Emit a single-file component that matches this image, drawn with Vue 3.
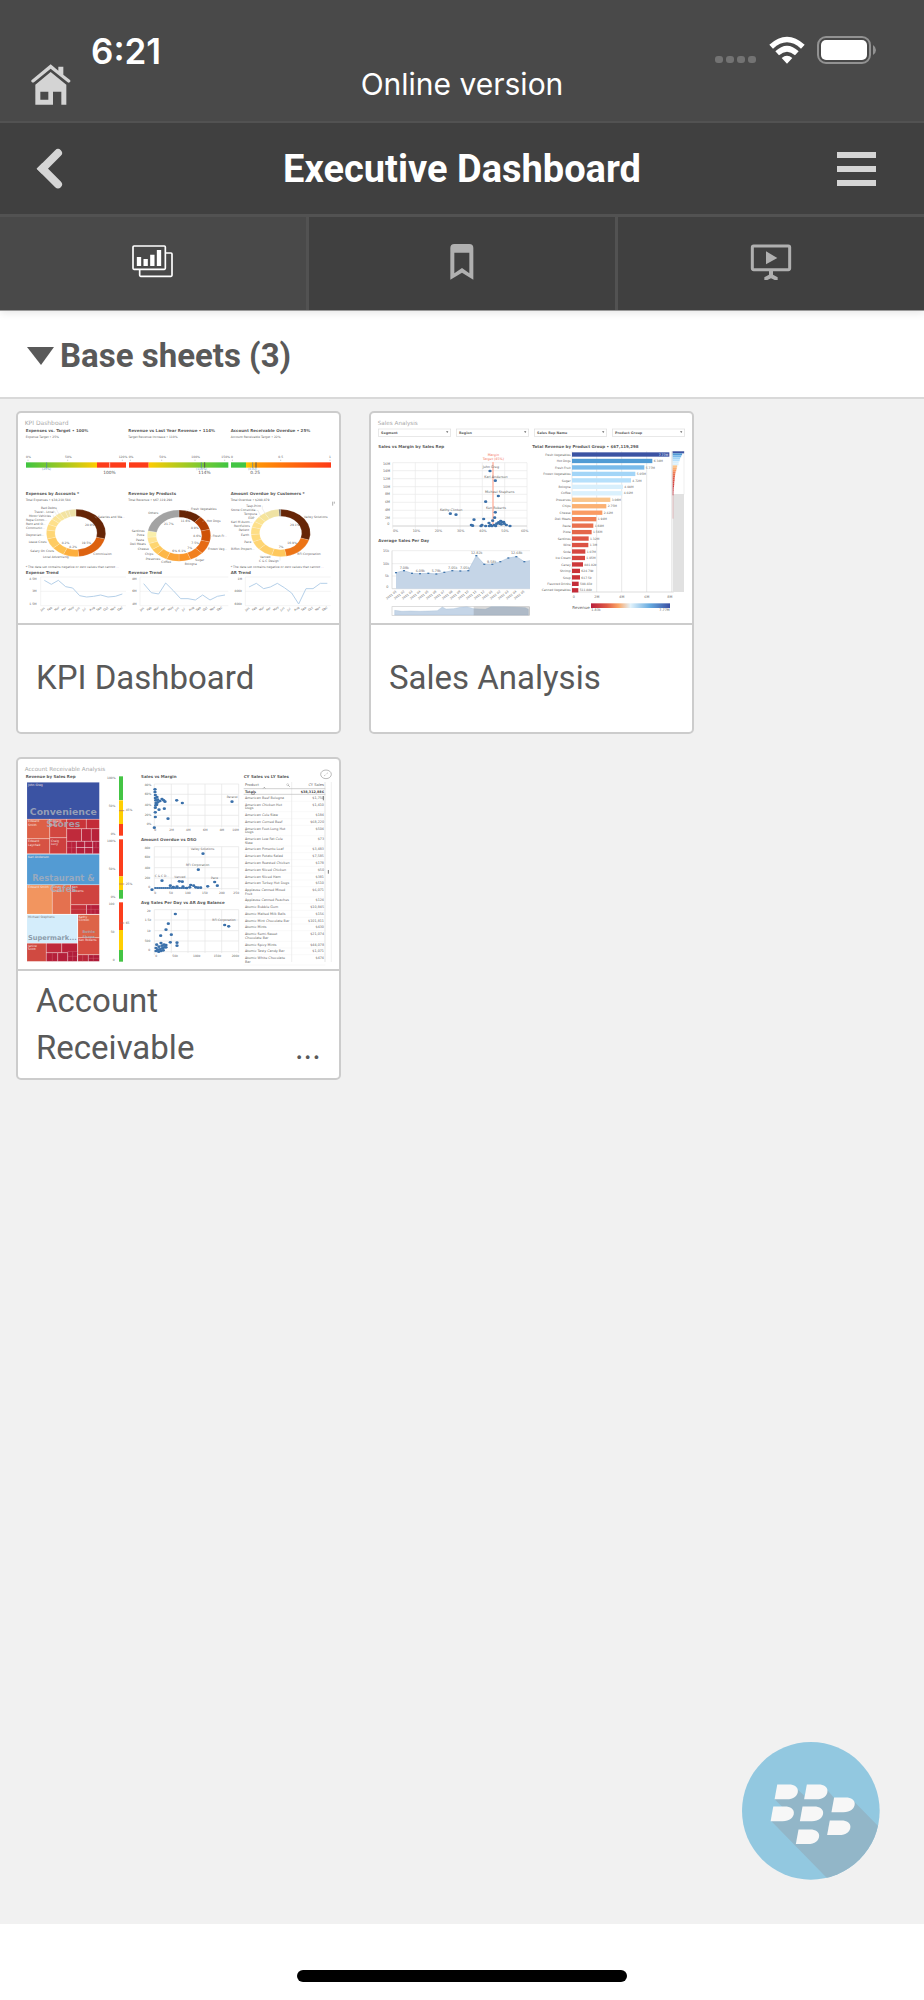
<script setup>
const TXT = '#666'

/* ---------- shared drawing helpers ---------- */
function point(cx, cy, rx, ry, f) {
  const a = f * Math.PI * 2
  return `${(cx + rx * Math.sin(a)).toFixed(1)} ${(cy - ry * Math.cos(a)).toFixed(1)}`
}
function slices(d) {
  let from = 0
  return d.parts.map(([to, fill]) => {
    const big = to - from > 0.5 ? 1 : 0
    const path = `M${point(d.cx, d.cy, d.rx, d.ry, from)}A${d.rx} ${d.ry} 0 ${big} 1 ${point(d.cx, d.cy, d.rx, d.ry, to)}` +
      `L${point(d.cx, d.cy, d.ix, d.iy, to)}A${d.ix} ${d.iy} 0 ${big} 0 ${point(d.cx, d.cy, d.ix, d.iy, from)}Z`
    from = to
    return { path, fill }
  })
}
const months = ['Jan', 'Feb', 'Mar', 'Apr', 'May', 'Jun', 'Jul', 'Aug', 'Sep', 'Oct', 'Nov', 'Dec']

/* ---------- KPI dashboard ---------- */
const donuts = [
  { cx: 198, cy: 383, rx: 89, ry: 71, ix: 63, iy: 50, parts: [[0.29, '#662506'], [0.485, '#dd6210'], [0.57, '#fdae3c'], [0.64, '#fec04f'], [0.71, '#fecb62'], [0.77, '#fed676'], [0.81, '#fedc82'], [0.85, '#fee08b'], [0.88, '#fbe395'], [0.91, '#f8e69c'], [0.94, '#f3e3a0'], [0.96, '#f0e2a6'], [1, '#ece0a8']] },
  { cx: 507, cy: 391, rx: 95, ry: 77, ix: 68, iy: 55, parts: [[0.12, '#662506'], [0.21, '#b03f04'], [0.29, '#cf5206'], [0.37, '#e66a14'], [0.44, '#f1801f'], [0.5, '#fb962a'], [0.565, '#fba437'], [0.62, '#fdb748'], [0.66, '#fec75a'], [0.7, '#fed56f'], [0.74, '#fee391'], [0.78, '#f9efab'], [1, '#a3a3a3']] },
  { cx: 812, cy: 383, rx: 89, ry: 71, ix: 63, iy: 50, parts: [[0.298, '#662506'], [0.47, '#ec7416'], [0.55, '#fec85c'], [0.63, '#fed06c'], [0.69, '#fed574'], [0.74, '#feda7c'], [0.79, '#fede85'], [0.83, '#fee08b'], [0.87, '#fbe393'], [0.91, '#f6e49b'], [0.99, '#efe2a3'], [1, '#777']] }
]
const kpiTitles = [
  [47, 81, 'Expenses vs. Target • 100%'], [355, 81, 'Revenue vs Last Year Revenue • 114%'], [662, 81, 'Account Receivable Overdue • 25%'],
  [47, 269, 'Expenses by Accounts *'], [355, 269, 'Revenue by Products'], [662, 269, 'Amount Overdue by Customers *'],
  [47, 505, 'Expense Trend'], [355, 505, 'Revenue Trend'], [662, 505, 'AR Trend']
]
const kpiSmall = [
  [47, 97, 'Expense Target • 25%'], [355, 97, 'Target Revenue Increase • 110%'], [662, 97, 'Account Receivable Target • 22%'],
  [47, 286, 'Total Expenses • $38,210,584'], [355, 286, 'Total Revenue • $67,119,298'], [662, 286, 'Total Overdue • $288,879'],
  [47, 488, '* The data set contains negative or zero values that cannot ...'], [662, 488, '* The data set contains negative or zero values that cannot ...'],
  [48, 159, '0%'], [165, 159, '50%'], [326, 159, '120%'], [356, 159, '0%'], [448, 159, '50%'], [544, 159, '100%'], [634, 159, '150%'], [663, 159, '0'], [805, 159, '0.5'], [957, 159, '1'],
  [93, 311, 'Bad Debts'], [73, 322, 'Travel - Local'], [57, 334, 'Motor Vehicles'], [48, 346, 'Repa Comm...'], [48, 358, 'Rent and O...'], [48, 370, 'Communic...'], [48, 391, 'Depreciati...'], [56, 414, 'Lease Costs'], [61, 440, 'Salary On Costs'], [99, 459, 'Local Advertising'], [264, 338, 'Salaries and Wa...'], [250, 449, 'Commission'],
  [415, 325, 'Others'], [543, 315, 'Fresh Vegetables'], [590, 349, 'Hot Dogs'], [608, 396, 'Fresh Fr...'], [594, 434, 'Frozen Veg...'], [556, 467, 'Sugar'], [524, 479, 'Bologna'], [454, 474, 'Coffee'], [407, 464, 'Preserves'], [405, 449, 'Chips'], [383, 433, 'Cheese'], [360, 418, 'Deli Meats'], [378, 406, 'Pasta'], [380, 393, 'Pizza'], [365, 380, 'Sardines'],
  [709, 305, 'Tasp-Print'], [663, 317, 'Stone Consolida...'], [702, 328, 'Tempura'], [715, 340, 'EDP'], [663, 352, 'Karl M Asom...'], [672, 364, 'Rectfullors'], [686, 376, 'Patient'], [693, 391, 'Earth'], [703, 412, 'Pace'], [663, 434, 'Biffon Propert...'], [750, 459, 'Varved'], [747, 471, 'C & C Design'], [882, 338, 'Valley Solutions'], [862, 449, 'RFI Corporation'],
  [225, 361, '28.9%'], [215, 416, '19.5%'], [155, 416, '8.2%'], [178, 428, '8.2%'], [462, 360, '21.7%'], [512, 349, '11.6%'], [543, 370, '8.9%'], [550, 395, '8.6%'], [544, 415, '7.5%'], [532, 431, '7%'], [505, 439, '6.1%'], [487, 439, '6%'], [840, 361, '29.1%'], [832, 416, '16.9%'], [806, 429, '7%']
]
const kpiTrends = [
  { x: 92, right: 348, labels: ['4.5M', '3M', '1.5M'], lx: 80, line: '103,525 124,537 145,525 167,544 188,548 209,571 230,575 251,573 272,569 294,575 316,573 337,566', start: 98 },
  { x: 390, right: 655, labels: ['8M', '6M', '4M'], lx: 380, line: '401,535 424,562 446,566 467,533 490,556 512,580 534,580 556,584 578,569 600,584 622,573 645,569', start: 396 },
  { x: 706, right: 962, labels: ['1M', '800k', '600k'], lx: 696, line: '717,545 739,534 761,550 781,545 802,534 823,547 845,563 866,596 888,550 909,550 931,534 952,534', start: 712 }
]

/* ---------- Sales analysis ---------- */
const filters = [[54, 'Segment'], [288, 'Region'], [522, 'Sales Rep Name'], [756, 'Product Group']]
const productBars = [
  ['Fresh Vegetables', 292, '7.77M', '#3b53a3'], ['Hot Dogs', 241, '6.38M', '#519bd4'], ['Fresh Fruit', 217, '5.77M', '#79baea'], ['Frozen Vegetables', 190, '5.05M', '#a3d5f7'], ['Sugar', 177, '4.72M', '#b7e0fb'], ['Bologna', 153, '4.08M', '#d8effc'], ['Coffee', 151, '4.02M', '#dbf1fd'], ['Preserves', 115, '3.06M', '#f9c58c'], ['Chips', 103, '2.75M', '#fbb071'], ['Cheese', 91, '2.42M', '#fa9b63'], ['Deli Meats', 73, '1.94M', '#f08055'], ['Pasta', 64, '1.68M', '#e9704e'], ['Pizza', 59, '1.56M', '#e4664a'], ['Sardines', 50, '1.32M', '#de5545'], ['Wine', 49, '1.3M', '#dc5244'], ['Soda', 40, '1.07M', '#d64741'], ['Ice Cream', 39, '1.05M', '#d5453f'], ['Canay', 33, '881.82k', '#cd383b'], ['Shrimp', 24, '624.79k', '#c93138'], ['Soup', 24, '617.5k', '#c93138'], ['Flavored Drinks', 20, '508.83k', '#c52d39'], ['Canned Vegetables', 19, '511.88k', '#c42b38']
]
const salesDots = [[389, 197], [405, 226], [414, 272], [376, 289], [270, 325], [287, 328], [405, 321], [341, 343], [370, 341], [403, 337], [397, 346], [386, 353], [333, 359], [337, 361], [365, 359], [362, 362], [376, 362], [391, 359], [395, 362], [402, 359], [406, 362], [409, 355], [415, 351], [418, 355], [421, 347], [425, 350], [430, 350], [432, 355], [423, 357], [438, 359], [449, 362], [387, 362]]
const salesText = [
  [367, 187, 'John Greg'], [372, 217, 'Karl Anderson'], [374, 262, 'Michael Stephens'], [377, 311, 'Ken Roberts'], [239, 317, 'Kathy Clinton'],
  [68, 180, '16M'], [68, 199, '14M'], [68, 223, '12M'], [68, 247, '10M'], [74, 270, '8M'], [74, 294, '6M'], [74, 318, '4M'], [74, 341, '2M'], [81, 360, '0'],
  [98, 380, '0%'], [157, 380, '10%'], [223, 380, '20%'], [290, 380, '30%'], [357, 380, '40%'], [423, 380, '50%'], [482, 380, '60%'],
  [68, 439, '15k'], [68, 478, '10k'], [74, 515, '5k'], [78, 549, '0'],
  [118, 490, '7.08k'], [166, 499, '6.09k'], [214, 501, '5.79k'], [263, 491, '7.05k'], [299, 491, '7.05k'], [332, 445, '12.82k'], [380, 472, '9.58k'], [452, 447, '12.68k'],
  [637, 577, '0'], [702, 577, '2M'], [777, 577, '4M'], [852, 577, '6M'], [921, 577, '8M'], [693, 618, '1.83k'], [897, 618, '7.77M']
]
const area = '107,502 131,496 155,504 179,505 204,504 228,506 252,501 276,496 300,497 324,496 348,451 372,477 396,477 420,469 444,458 468,454 492,469 509,466'
const areaDots = area.split(' ').slice(0, 17).map(p => p.split(',').map(Number))
const days = ['2011-01', '2011-02', '2011-03', '2011-04', '2011-05', '2011-06', '2011-07', '2011-08', '2011-09', '2011-10', '2011-11', '2011-12', '2012-01', '2012-02', '2012-03', '2012-04', '2012-05']

/* ---------- Account receivable ---------- */
const tree = [
  [51, 96, 217, 110, '#3b53a3'], [51, 207, 68, 58, '#dd6046'], [51, 266, 68, 44, '#d65243'], [120, 207, 50, 55, '#d24740'], [120, 263, 50, 47, '#cd3f3e'], [171, 207, 57, 28, '#c93439'], [229, 207, 39, 28, '#c32c38'], [171, 236, 43, 36, '#bf2a3b'], [215, 236, 28, 36, '#ba243a'], [244, 236, 24, 36, '#b82239'], [171, 273, 27, 37, '#b9213b'], [199, 273, 25, 18, '#b31e3b'], [225, 273, 23, 18, '#b31e3b'], [199, 292, 25, 18, '#b31e3b'], [225, 292, 23, 18, '#b31e3b'], [249, 273, 19, 37, '#b01c3b'],
  [51, 312, 217, 91, '#539bd3'], [51, 404, 75, 87, '#f2955f'], [127, 404, 55, 87, '#e4714f'], [183, 404, 85, 59, '#cf433f'], [183, 464, 46, 27, '#c3303a'], [230, 464, 38, 27, '#b51f3a'],
  [51, 493, 151, 85, '#d4edfb'], [204, 493, 64, 69, '#dd6448'], [204, 563, 64, 50, '#d64d41'], [51, 579, 57, 54, '#d04a41'], [109, 579, 46, 28, '#bf2a3c'], [156, 579, 46, 28, '#b9223a'], [109, 608, 34, 25, '#b51f3a'], [144, 608, 29, 25, '#b51f3a'], [174, 604, 28, 29, '#b11c3a'], [204, 614, 30, 19, '#b92739'], [235, 614, 33, 19, '#ae1b38']
]
const treeSplit = 'M185 273v37M171 292h27M249 292h19M258 273v19M183 477h46M230 477h38M243 464v27M255 477v14M174 618h28M188 604v29M235 624h33M250 614v19M127 608v25M218 614v19'
const treeText = [[54, 107, 'John Greg'], [54, 216, 'Edward'], [54, 227, 'Smith'], [121, 216, 'Edward'], [121, 227, 'Ross'], [54, 276, 'Edward'], [54, 286, 'Laychak'], [123, 274, 'Craig'], [123, 285, 'Lucy'], [54, 323, 'Karl Anderson'], [54, 414, 'Edward Smith'], [128, 414, 'Cindy'], [128, 424, 'Cheuk'], [186, 414, 'Ken'], [186, 424, 'Roberts'], [206, 502, 'Kathy'], [206, 513, 'Clinton'], [206, 573, 'Ken Roberts'], [54, 589, 'Janice'], [54, 600, 'Scott']]
const gauges = [
  [78, 71, '#44c444'], [150, 71, '#ffcf02'], [221, 35, '#fc3e1d'],
  [267, 111, '#fc3e1d'], [378, 41, '#ffcf02'], [419, 26, '#44c444'],
  [456, 83, '#fc3e1d'], [539, 60, '#ffcf02'], [599, 35, '#44c444']
]
const arDots = [
  [500, 150], [517, 158], [666, 154], [474, 205], [447, 178], [463, 175], [465, 154], [456, 146], [461, 150], [450, 152], [436, 200], [436, 186], [433, 232], [435, 117], [435, 125], [436, 134], [436, 143], [437, 150], [438, 158], [437, 165], [436, 172], [441, 140], [443, 148], [443, 156], [440, 163],
  [579, 310], [565, 358], [456, 391], [508, 393], [517, 394], [614, 395], [622, 406], [593, 408], [426, 418], [481, 406], [490, 410], [501, 409], [519, 409], [542, 404], [551, 406], [557, 411], [564, 412], [572, 412], [539, 411], [530, 413],
  [496, 491], [475, 520], [468, 538], [484, 553], [452, 556], [644, 524], [656, 528], [481, 576], [501, 577], [501, 586], [440, 583], [447, 589], [453, 578], [456, 586], [462, 583], [468, 584], [438, 593], [443, 598], [450, 597], [457, 594], [463, 591], [438, 602], [446, 604], [453, 602], [460, 600], [468, 591]
]
const flatDots = Array.from({ length: 16 }, (_, i) => 436 + i * 6)
const arText = [
  [291, 87, '100%'], [296, 169, '50%'], [302, 253, '0%'], [347, 183, '45%'], [291, 275, '100%'], [296, 359, '50%'], [302, 442, '0%'], [347, 403, '25%'], [296, 465, '100'], [302, 547, '50'], [308, 631, '0'], [347, 521, '65'],
  [404, 107, '80%'], [404, 134, '60%'], [404, 166, '40%'], [404, 197, '20%'], [410, 225, '0%'], [433, 243, '0'], [478, 243, '2M'], [528, 243, '4M'], [579, 243, '6M'], [629, 243, '8M'], [667, 243, '10M'], [650, 143, 'Paracel'],
  [404, 296, '80k'], [404, 323, '60k'], [404, 355, '40k'], [404, 386, '20k'], [415, 413, '0'], [433, 431, '0'], [477, 431, '50'], [525, 431, '100'], [576, 431, '150'], [627, 431, '200'], [670, 431, '250'], [542, 299, 'Valley Solutions'], [528, 346, 'RFI Corporation'], [434, 380, 'C & C D...'], [493, 382, 'Vanved'], [603, 385, 'Pace'],
  [411, 486, '2k'], [404, 512, '1.5k'], [411, 544, '1k'], [404, 575, '500'], [415, 602, '0'], [436, 621, '0'], [487, 621, '50k'], [549, 621, '100k'], [611, 621, '150k'], [665, 621, '200k'], [607, 513, 'RFI Corporation']
]
const arRows = [
  [146, ['American Beef Bologna'], '$1,750'], [166, ['American Chicken Hot', 'Dogs'], '$1,410'], [198, ['American Cole Slaw'], '$184'], [218, ['American Corned Beef'], '$68,220'], [238, ['American Foot-Long Hot', 'Dogs'], '$504'], [269, ['American Low Fat Cole', 'Slaw'], '$73'], [300, ['American Pimento Loaf'], '$3,483'], [321, ['American Potato Salad'], '$7,585'], [341, ['American Roasted Chicken'], '$178'], [361, ['American Sliced Chicken'], '$50'], [382, ['American Sliced Ham'], '$381'], [402, ['American Turkey Hot Dogs'], '$510'], [422, ['Applause Canned Mixed', 'Fruit'], '$6,071'], [453, ['Applause Canned Peaches'], '$124'], [473, ['Atomic Bubble Gum'], '$10,845'], [494, ['Atomic Malted Milk Balls'], '$156'], [514, ['Atomic Mint Chocolate Bar'], '$101,811'], [534, ['Atomic Mints'], '$430'], [555, ['Atomic Semi-Sweet', 'Chocolate Bar'], '$21,074'], [586, ['Atomic Spicy Mints'], '$44,078'], [606, ['Atomic Tasty Candy Bar'], '$1,071'], [626, ['Atomic White Chocolate', 'Bar'], '$474']
]

/* ---------- floating button glyph ---------- */
const keys = [[171, 193], [260, 193], [342, 232], [159, 259], [247, 259], [329, 301], [235, 328]]
</script>

<template>
  <div class="app">
    <header>
      <div class="status">
        <div class="status-left">
          <button class="plain home" aria-label="Home">
            <svg width="40" height="42" viewBox="95 193 120 126" fill="#d4d4d4">
              <path d="M154 194 177 213V201H192V225L212 241Q215 245 211 248 208 250 205 248L154 207 104 248Q100 250 97 247 94 243 98 240Z" />
              <path fill-rule="evenodd" d="M154 217 201 255V315H186V276H161V315H108V255ZM123 276V300H147V276Z" />
            </svg>
          </button>
          <time class="clock">6:21</time>
        </div>
        <p class="online">Online version</p>
        <div class="status-right">
          <svg width="42" height="28" viewBox="0 0 42 28" fill="#737373"><rect v-for="i in 4" :key="i" :x="(i - 1) * 11" y="20" width="8" height="7" rx="3" /></svg>
          <svg width="38" height="28" viewBox="0 0 114 84" fill="#fff">
            <path d="M4 26Q57-22 110 26L99 38Q57 0 15 38ZM22 46Q57 12 92 46L81 58Q57 36 33 58ZM41 66Q57 52 73 66L57 83Z" />
          </svg>
          <svg width="60" height="28" viewBox="0 0 60 28">
            <rect x="1" y="1" width="52" height="26" rx="8" fill="none" stroke="#929292" stroke-width="2" />
            <rect x="4" y="4" width="46" height="20" rx="5" fill="#fff" /><path d="M56 9q3 2 3 5t-3 5z" fill="#929292" />
          </svg>
        </div>
      </div>

      <div class="titlebar">
        <button class="plain" aria-label="Back">
          <svg width="28" height="42" viewBox="108 446 84 126"><path d="M174 461 127 508 174 555" fill="none" stroke="#d5d5d5" stroke-width="24" stroke-linecap="round" /><path d="M110 508 127 491 144 508 127 525Z" fill="#d5d5d5" /></svg>
        </button>
        <h1>Executive Dashboard</h1>
        <button class="plain menu" aria-label="Menu">
          <svg width="40" height="34" viewBox="0 0 40 34" fill="#d5d5d5"><path d="M0 0h39v6H0zM0 14h39v6H0zM0 28h39v6H0z" /></svg>
        </button>
      </div>

      <nav class="tabs">
        <button class="tab active" aria-label="Sheets">
          <svg width="42" height="34" viewBox="399 735 126 102" fill="none" stroke="#fff" stroke-width="5">
            <rect x="402" y="738" width="97" height="70" rx="3" /><path d="M500 759h16q3 0 3 3v64q0 3-3 3h-91q-3 0-3-3v-17" />
            <path d="M420 771v27M440 777v21M460 764v34M480 750v48" stroke-width="13" />
          </svg>
        </button>
        <button class="tab" aria-label="Bookmarks">
          <svg width="24" height="36" viewBox="0 0 72 108"><path fill="#b0b0b0" fill-rule="evenodd" d="M1 107V12Q1 0 13 0H58Q70 0 70 12V107L36 86ZM13 26V88L36 72 58 88V26Z" /></svg>
        </button>
        <button class="tab" aria-label="Stories">
          <svg width="42" height="36" viewBox="861 729 126 108">
            <rect x="868" y="735" width="112" height="71" rx="4" fill="none" stroke="#b0b0b0" stroke-width="9" />
            <path fill="#b0b0b0" d="M909 751 943 771 909 790ZM918 808H930V821L944 829V837H935L924 832 913 837H904V829L918 821Z" />
          </svg>
        </button>
      </nav>
    </header>

    <main>
      <h2 class="section">
        <button class="plain toggle">
          <svg width="27" height="18" viewBox="0 0 27 18"><path d="M0 0h27L14 18z" fill="#595959" /></svg>
          <span>Base sheets (3)</span>
        </button>
      </h2>

      <div class="sheets">
        <a class="card" href="#kpi-dashboard">
          <svg class="thumb" viewBox="24 23 963 630" role="img" aria-label="KPI Dashboard preview">
            <defs>
              <linearGradient id="gy"><stop stop-color="#3fc541" /><stop offset="1" stop-color="#ffcb02" /></linearGradient>
              <linearGradient id="yg"><stop stop-color="#ffcb02" /><stop offset="0.7" stop-color="#72c935" /><stop offset="1" stop-color="#3fc541" /></linearGradient>
              <linearGradient id="yr"><stop stop-color="#ffcb02" /><stop offset="0.15" stop-color="#ff9306" /><stop offset="1" stop-color="#fd3a18" /></linearGradient>
            </defs>
            <text x="44" y="59" font-size="18" fill="#aaa">KPI Dashboard</text>
            <rect x="48" y="171" width="213" height="16" fill="url(#gy)" /><rect x="261" y="171" width="87" height="16" fill="#fd3c1a" />
            <rect x="357" y="171" width="59" height="16" fill="#fd3c1a" /><rect x="416" y="171" width="239" height="16" fill="url(#yg)" />
            <rect x="663" y="171" width="45" height="16" fill="#43c544" /><rect x="708" y="171" width="255" height="16" fill="url(#yr)" />
            <path d="M299 171v16" stroke="#fff" stroke-width="2" />
            <path d="M110 171v18M574 171v18M728 171v18" stroke="#4a7fb5" stroke-width="2" />
            <path d="M584 171v16M738 171v16" stroke="#555" stroke-width="3" />
            <path d="M54 163v4M173 163v4M337 163v4M361 163v4M455 163v4M555 163v4M644 163v4M667 163v4M812 163v4M960 163v4" stroke="#bbb" stroke-width="2" />
            <g fill="#6d9bc5" font-size="9"><text x="96" y="195">(25%)</text><text x="558" y="195">(110%)</text><text x="714" y="195">(0.22)</text></g>
            <g fill="#555" font-size="13"><text x="280" y="205">100%</text><text x="565" y="205">114%</text><text x="721" y="205">0.25</text></g>
            <template v-for="d in donuts" :key="d.cx">
              <path v-for="s in slices(d)" :key="s.path" :d="s.path" :fill="s.fill" stroke="#fff" stroke-opacity="0.5" />
            </template>
            <path d="M140 306v7l8 16M134 318l6 12M130 330l3 8M535 313l-8 6M585 345l-8 4M600 395l8-3M757 301v9l8 14M743 314l10 20M260 338l-6-4M810 466v-12" fill="none" stroke="#ccc" />
            <g font-size="12" font-weight="700" fill="#5c5c5c"><text v-for="t in kpiTitles" :key="t[0] + '-' + t[1]" :x="t[0]" :y="t[1]">{{ t[2] }}</text></g>
            <g font-size="9" :fill="TXT"><text v-for="t in kpiSmall" :key="t[0] + '-' + t[1]" :x="t[0]" :y="t[1]">{{ t[2] }}</text></g>
            <g v-for="t in kpiTrends" :key="t.x">
              <path :d="`M${t.x} 515V601M${t.x} 515H${t.right}M${t.x} 558H${t.right}M${t.x} 601H${t.right}`" stroke="#ddd" stroke-width="1" />
              <polyline :points="t.line" fill="none" stroke="#b5d0e9" stroke-width="3" />
              <text v-for="(l, i) in t.labels" :key="l" :x="t.lx" :y="523 + i * 38" font-size="9" text-anchor="end" :fill="TXT">{{ l }}</text>
              <text v-for="(m, i) in months" :key="m" :transform="`translate(${t.start + i * 21 - 4} 618) rotate(-38)`" font-size="9" :fill="TXT">{{ m }}</text>
            </g>
            <path d="M968 289v12M973 289v6" stroke="#888" stroke-width="2" />
          </svg>
          <span class="label"><span>KPI Dashboard</span></span>
        </a>

        <a class="card" href="#sales-analysis">
          <svg class="thumb" viewBox="32 23 963 630" role="img" aria-label="Sales Analysis preview">
            <defs><linearGradient id="rb"><stop stop-color="#b81f3c" /><stop offset="0.2" stop-color="#df5a45" /><stop offset="0.35" stop-color="#fba768" /><stop offset="0.5" stop-color="#e2f3fc" /><stop offset="0.75" stop-color="#64a9df" /><stop offset="1" stop-color="#3b4fa2" /></linearGradient></defs>
            <text x="52" y="59" font-size="17" fill="#aaa">Sales Analysis</text>
            <g v-for="f in filters" :key="f[1]">
              <rect :x="f[0]" y="71" width="217" height="22" fill="#fff" stroke="#ddd" stroke-width="2" />
              <text :x="f[0] + 8" y="85" font-size="10" font-weight="700" fill="#5c5c5c">{{ f[1] }}</text>
              <path :d="`M${f[0] + 203} 78h7l-3 5z`" fill="#666" />
            </g>
            <g font-size="12" font-weight="700" fill="#5c5c5c"><text x="54" y="128">Sales vs Margin by Sales Rep</text><text x="516" y="128">Total Revenue by Product Group • $67,119,298</text><text x="54" y="411">Average Sales Per Day</text></g>
            <path d="M97 172H500M97 196H500M97 220H500M97 244H500M97 267H500M97 291H500M97 315H500M97 338H500M97 362H500M97 172V370M165 172V370M232 172V370M299 172V370M366 172V370M433 172V370M500 172V370" stroke="#e9e9e9" stroke-width="2" />
            <path d="M97 362H500" stroke="#ccc" stroke-width="2" />
            <path d="M398 170V362" stroke="#ffb39f" stroke-width="4" />
            <g font-size="10" text-anchor="middle" fill="#f4735e"><text x="399" y="152">Margin</text><text x="399" y="163">Target (45%)</text></g>
            <ellipse v-for="(p, i) in salesDots" :key="i" :cx="p[0]" :cy="p[1]" rx="5" ry="4" fill="#3a6fa8" />
            <path d="M95 436H509M95 475H509M95 512H509" stroke="#e5e5e5" stroke-width="2" />
            <path d="M95 436V550H509" fill="none" stroke="#ccc" stroke-width="2" />
            <polygon :points="`107,550 ${area} 509,550`" fill="#c5d5e7" /><polyline :points="area" fill="none" stroke="#a9c1dc" stroke-width="2" />
            <rect v-for="p in areaDots" :key="p[0]" :x="p[0] - 3" :y="p[1] - 2" width="6" height="4" fill="#4478ad" />
            <text v-for="(d, i) in days" :key="d" :transform="`translate(${80 + i * 24} 583) rotate(-38)`" font-size="9" :fill="TXT">{{ d }}</text>
            <rect x="95" y="604" width="412" height="26" fill="#fff" stroke="#ccc" stroke-width="2" />
            <path d="M103 629V615L125 618 150 617 180 618 205 617 231 616 246 605 257 611 280 610 300 606 320 604 340 610 375 612 393 604 430 604 470 606 495 607 504 612V629Z" fill="#c5d5e7" stroke="#9eb9d6" />
            <rect x="340" y="604" width="168" height="26" fill="#777" fill-opacity="0.28" />
            <path d="M635 138V562M709 138V560M784 138V560M859 138V560M934 138V560" stroke="#ddd" stroke-width="2" />
            <path d="M635 560H940" stroke="#ccc" stroke-width="2" />
            <g v-for="(b, i) in productBars" :key="b[0]" font-size="9" :fill="TXT">
              <text x="631" :y="151 + i * 19.4" text-anchor="end">{{ b[0] }}</text>
              <rect x="635" :y="141 + i * 19.4" :width="b[1]" height="13" :fill="b[3]" />
              <text v-if="i" :x="639 + b[1]" :y="151 + i * 19.4">{{ b[2] }}</text>
              <text v-else x="923" y="151" text-anchor="end" fill="#fff">{{ b[2] }}</text>
            </g>
            <rect x="937" y="138" width="34" height="422" fill="#e1e1e1" /><rect x="937" y="138" width="34" height="129" fill="#fff" stroke="#ccc" />
            <rect v-for="(b, i) in productBars" :key="b[0]" x="937" :y="138 + i * 6" :width="b[1] / 8.5" height="6" :fill="b[3]" />
            <path d="M938 265V340" stroke="#d9a2a4" stroke-width="2" />
            <text x="636" y="611" font-size="12" fill="#5c5c5c">Revenue</text><rect x="692" y="594" width="237" height="14" fill="url(#rb)" />
            <g font-size="10" :fill="TXT"><text v-for="t in salesText" :key="t[0] + '-' + t[1]" :x="t[0]" :y="t[1]">{{ t[2] }}</text></g>
          </svg>
          <span class="label"><span>Sales Analysis</span></span>
        </a>

        <a class="card" href="#account-receivable">
          <svg class="thumb" viewBox="24 26 963 630" role="img" aria-label="Account Receivable Analysis preview">
            <text x="44" y="62" font-size="17" fill="#aaa">Account Receivable Analysis</text>
            <g font-size="12" font-weight="700" fill="#5c5c5c"><text x="47" y="84">Revenue by Sales Rep</text><text x="393" y="84">Sales vs Margin</text><text x="393" y="273">Amount Overdue vs DSO</text><text x="393" y="462">Avg Sales Per Day vs AR Avg Balance</text><text x="701" y="84">CY Sales vs LY Sales</text></g>
            <rect v-for="r in tree" :key="r[0] + '-' + r[1]" :x="r[0]" :y="r[1]" :width="r[2]" :height="r[3]" :fill="r[4]" stroke="#fff" stroke-opacity="0.4" />
            <path :d="treeSplit" stroke="#d77b86" />
            <g font-size="9" fill="#f7e5e1"><text v-for="t in treeText" :key="t[0] + '-' + t[1]" :x="t[0]" :y="t[1]">{{ t[2] }}</text></g>
            <text x="54" y="503" font-size="9" fill="#777">Michael Stephens</text>
            <g font-weight="700" text-anchor="middle" fill="#a5adbb" fill-opacity="0.85">
              <text x="160" y="195" font-size="28">Convenience</text><text x="160" y="231" font-size="28">Stores</text>
              <text x="160" y="393" font-size="25">Restaurant &amp;</text><text x="160" y="426" font-size="25">Cafes</text>
              <text x="127" y="570" font-size="20" fill="#7d8c9a">Supermark...</text>
              <text x="236" y="549" font-size="11">Bottle</text><text x="236" y="562" font-size="11">Shops</text>
            </g>
            <rect v-for="g in gauges" :key="g[0]" x="327" :y="g[0]" width="12" :height="g[1]" :fill="g[2]" />
            <path d="M327 181h16M327 401h16M327 518h16" stroke="#a66" stroke-width="2" />
            <path v-for="y in [101, 289, 478]" :key="y" :d="`M433 ${y}H686M433 ${y + 31}H686M433 ${y + 63}H686M433 ${y + 94}H686M433 ${y + 126}H686M433 ${y}v136M484 ${y}v130M534 ${y}v130M585 ${y}v130M635 ${y}v130M686 ${y}v130`" stroke="#e4e4e4" stroke-width="2" />
            <g fill="#3a70aa"><ellipse v-for="(p, i) in arDots" :key="i" :cx="p[0]" :cy="p[1]" rx="5" ry="4" /><ellipse v-for="x in flatDots" :key="x" :cx="x" cy="413" rx="4" ry="3" /></g>
            <g font-size="9" :fill="TXT"><text v-for="t in arText" :key="t[0] + '-' + t[1]" :x="t[0]" :y="t[1]">{{ t[2] }}</text></g>
            <rect x="942" y="95" width="6" height="540" fill="#f2f2f2" /><path d="M845 95V635M964 95V635" stroke="#e8e8e8" stroke-width="2" />
            <path d="M701 115H946M701 132H946" stroke="#bbb" stroke-width="2" />
            <g font-size="11" :fill="TXT"><text x="705" y="107">Product</text><text x="942" y="107" text-anchor="end">CY Sales</text></g>
            <g font-size="10" font-weight="700" fill="#444"><text x="705" y="127">Totals</text><text x="942" y="127" text-anchor="end">$38,312,886</text></g>
            <circle cx="833" cy="103" r="3" fill="none" stroke="#888" /><path d="M835 105l4 4M760 114l3-3 3 3M725 124v8h8v-6" stroke="#777" stroke-width="2" fill="none" />
            <g v-for="r in arRows" :key="r[0]" font-size="10" :fill="TXT">
              <path :d="`M701 ${r[0] + 7 + (r[1].length - 1) * 11}H946`" stroke="#eee" />
              <text v-for="(l, i) in r[1]" :key="l" x="705" :y="r[0] + i * 11">{{ l }}</text><text x="942" :y="r[0]" text-anchor="end">{{ r[2] }}</text>
            </g>
            <path d="M940 137v13M955 359v11" stroke="#777" stroke-width="3" />
            <ellipse cx="948" cy="72" rx="16" ry="13" fill="#fff" stroke="#999" stroke-width="2" /><path d="M943 76l3-2M950 70l3-2" fill="none" stroke="#888" stroke-width="2" />
          </svg>
          <span class="label"><span>Account Receivable</span><span class="dots">...</span></span>
        </a>
      </div>
    </main>

    <footer><span class="indicator"></span></footer>

    <button class="plain fab" aria-label="BlackBerry launcher">
      <svg width="138" height="138" viewBox="65 65 415 415">
        <defs><clipPath id="disc"><circle cx="272" cy="272" r="207" /></clipPath></defs>
        <circle cx="272" cy="272" r="207" fill="#92c8e0" />
        <path clip-path="url(#disc)" fill="#92b6c8" d="M152 302 332 486 486 486V330L402 244 370 260 344 236 322 210 300 230 252 236V226L232 208 210 230 163 237 188 262 175 290Z" />
        <path v-for="k in keys" :key="k[0]" :transform="`translate(${k[0]} ${k[1]})`" fill="#f7f7f7" d="M0 0H35C52 0 62 8 62 19 62 33 49 44 28 44H-8Z" />
      </svg>
    </button>
  </div>
</template>

<style>
html, body { background: #fff; }
body { margin: 0; }
</style>

<style scoped>
.app { min-height: 100vh; display: flex; flex-direction: column; background: #f1f1f1; color: #595959; font-family: Roboto, "Noto Sans", sans-serif; }
.plain { display: flex; padding: 0; border: 0; background: none; color: inherit; font: inherit; cursor: pointer; }
svg { display: block; flex: none; }
header { position: relative; background: #404040; color: #fff; box-shadow: 0 2px 8px rgba(0, 0, 0, 0.1); }

.status { display: grid; grid-template-columns: 1fr auto 1fr; align-items: start; height: 121px; border-bottom: 2px solid #525252; background: #494949; font-family: Inter, sans-serif; }
.status-left { display: flex; align-items: flex-start; gap: 20px; padding-left: 31px; }
.home { margin-top: 64px; }
.clock { margin-top: 30px; font-size: 35px; line-height: 42px; font-weight: 600; }
.online { margin: 64px 0 0; font-size: 30px; line-height: 40px; }
.status-right { display: flex; justify-content: flex-end; gap: 11px; padding: 36px 47px 0 0; }

.titlebar { display: grid; grid-template-columns: 1fr auto 1fr; align-items: center; height: 91px; padding: 0 47px 0 36px; border-bottom: 3px solid #525252; }
.titlebar { padding-left: 36px; padding-right: 36px; }
.menu { justify-self: end; padding-right: 11px; }
h1 { margin: 0; font-size: 38px; line-height: 48px; font-weight: 700; }

.tabs { display: grid; grid-template-columns: repeat(3, 1fr); gap: 3px; height: 93px; border-bottom: 1px solid #999; background: #525252; }
.tab { display: flex; align-items: center; justify-content: center; padding: 0 0 4px; border: 0; background: #404040; cursor: pointer; }
.tab.active { background: #494949; }

main { flex: 1; }
.section { margin: 0; padding: 22px 27px 18px; border-bottom: 2px solid #d9d9d9; background: #fff; font-size: 33px; line-height: 46px; font-weight: 700; }
.toggle { align-items: center; gap: 6px; }

.sheets { display: grid; grid-template-columns: repeat(auto-fill, 325px); gap: 23px 28px; padding: 12px 16px; }
.card { display: flex; flex-direction: column; box-sizing: border-box; overflow: hidden; border: 2px solid #ccc; border-radius: 5px; background: #fff; color: inherit; text-decoration: none; }
.thumb { width: 100%; height: auto; border-bottom: 2px solid #ccc; font-family: "DejaVu Sans", sans-serif; }
.label { display: flex; align-items: center; justify-content: space-between; height: 107px; padding: 0 18px 2px; box-sizing: border-box; font-size: 33px; line-height: 47px; }
.dots { align-self: flex-end; padding-bottom: 5px; }

footer { display: flex; justify-content: center; align-items: flex-end; height: 76px; background: #fff; }
.indicator { width: 330px; height: 12px; margin-bottom: 18px; border-radius: 6px; background: #000; }
.fab { position: fixed; right: 44px; bottom: 120px; border-radius: 50%; }
</style>
